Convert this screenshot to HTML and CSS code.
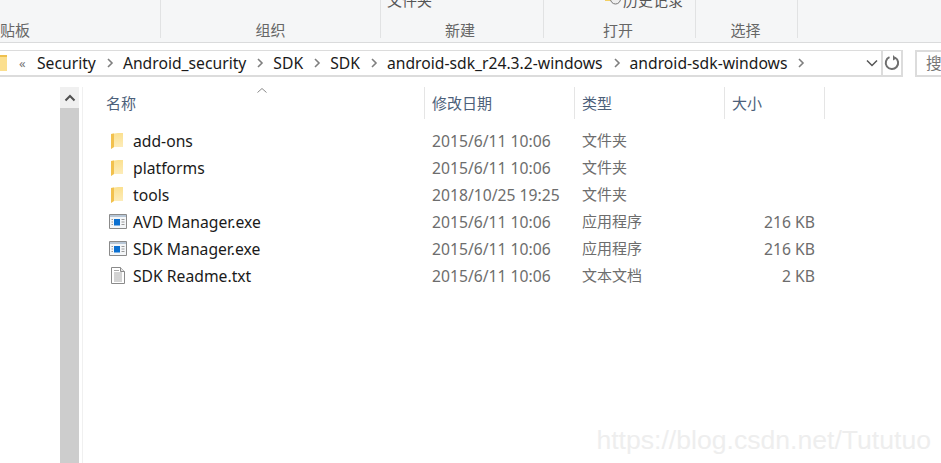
FILE: index.html
```html
<!DOCTYPE html>
<html lang="en">
<head>
    <meta charset="UTF-8">
    <title>android-sdk-windows</title>
    <link rel="stylesheet" href="styles.css">
</head>
<body>
    <svg class="defs" width="0" height="0">
        <defs>
            <linearGradient id="folderFill" x1="0" y1="0" x2="0" y2="1">
                <stop offset="0" stop-color="#fbe08f"/>
                <stop offset="1" stop-color="#fdeec0"/>
            </linearGradient>
        </defs>
        <symbol id="folder" viewBox="0 0 12 16">
            <path d="M0 1l7-1h5v14h-9l-3 2z" fill="url(#folderFill)"/>
            <path d="M0 1l3-.5v13.500l-3 2z" fill="#f2c14e"/>
        </symbol>
        <symbol id="exe" viewBox="0 0 18 15">
            <path d="M.5.5h17v14h-17z" fill="#f4f6f8" stroke="#8a8a8a"/>
            <path d="M1 1h16v2h-16z" fill="#b7c6d6"/>
            <path d="M5 5h6v6.500h-6z" fill="#0a6fd0"/>
            <path d="M12.500 5.500h3M12.500 8h3M12.500 10.500h3M2.500 5.500h1.500M2.500 8h1.500M2.500 10.500h1.500" stroke="#9a9a9a" fill="none"/>
        </symbol>
        <symbol id="txt" viewBox="0 0 14 17">
            <path d="M.5.500h9l4 4v12h-13z" fill="#fff" stroke="#8a8a8a"/>
            <path d="M9.500.500v4h4" fill="#e4e4e4" stroke="#8a8a8a"/>
            <path d="M3 3.500h5M3 6h8M3 8h8M3 10h8M3 12h8M3 14h8" stroke="#a8a8a8" fill="none"/>
        </symbol>
        <symbol id="chev" viewBox="0 0 8 12">
            <path d="M2 2l4 4-4 4" fill="none" stroke="#7f7f7f" stroke-width="1.600"/>
        </symbol>
    </svg>

    <div class="ribbon">
        <div class="group group-clip"><span class="label">贴板</span></div>
        <div class="group group-org"><span class="label">组织</span></div>
        <div class="group group-new">
            <span class="cut cut-new">文件夹</span>
            <span class="label">新建</span>
        </div>
        <div class="group group-open">
            <span class="cut cut-open">
                <svg width="16" height="14" viewBox="0 0 16 14">
                    <path d="M0 0h7v8h-7z" fill="#f3d063"/>
                    <circle cx="10.500" cy="6" r="5" fill="#eee" stroke="#777"/>
                    <path d="M2 6l3.500-5 3.500 5z" fill="#2fa52f"/>
                </svg>
                历史记录
            </span>
            <span class="label">打开</span>
        </div>
        <div class="group group-select"><span class="label">选择</span></div>
    </div>

    <div class="address-row">
        <div class="address">
            <svg class="addr-folder" width="7" height="16" viewBox="0 0 7 16">
                <path d="M0 0h7v16h-7z" fill="#fbdf8f"/>
                <path d="M0 0h7v2h-7z" fill="#eec04f"/>
            </svg>
            <span class="more">«</span>
            <span class="crumb">Security</span>
            <svg class="sep"><use href="#chev"/></svg>
            <span class="crumb">Android_security</span>
            <svg class="sep"><use href="#chev"/></svg>
            <span class="crumb">SDK</span>
            <svg class="sep"><use href="#chev"/></svg>
            <span class="crumb">SDK</span>
            <svg class="sep"><use href="#chev"/></svg>
            <span class="crumb">android-sdk_r24.3.2-windows</span>
            <svg class="sep"><use href="#chev"/></svg>
            <span class="crumb">android-sdk-windows</span>
            <svg class="sep"><use href="#chev"/></svg>
            <svg class="drop" width="12" height="8" viewBox="0 0 12 8">
                <path d="M1 1.500l5 5 5-5" fill="none" stroke="#555" stroke-width="1.500"/>
            </svg>
            <div class="refresh">
                <svg width="16" height="16" viewBox="0 0 16 16">
                    <path d="M11 2.500a6.200 6.200 0 1 1-5.500-.3" fill="none" stroke="#6f6f6f" stroke-width="2"/>
                    <path d="M9 0v5.500l3.500-2z" fill="#6f6f6f"/>
                </svg>
            </div>
        </div>
        <div class="search">搜</div>
    </div>

    <div class="main">
        <div class="scrollbar">
            <div class="scroll-up">
                <svg width="12" height="8" viewBox="0 0 12 8">
                    <path d="M1.500 6.500l4.500-4.500 4.500 4.500" fill="none" stroke="#505050" stroke-width="2"/>
                </svg>
            </div>
            <div class="scroll-thumb"></div>
        </div>
        <div class="files">
            <div class="columns">
                <div class="col col-name">名称
                    <svg class="sort" width="10" height="5" viewBox="0 0 10 5">
                        <path d="M.5 4.500l4.500-4 4.500 4" fill="none" stroke="#8a8a8a"/>
                    </svg>
                </div>
                <div class="col col-date">修改日期</div>
                <div class="col col-type">类型</div>
                <div class="col col-size">大小</div>
            </div>
            <div class="rows">
                <div class="row">
                    <div class="cell-name"><svg class="icon-folder"><use href="#folder"/></svg>add-ons</div>
                    <div class="cell-date">2015/6/11 10:06</div>
                    <div class="cell-type">文件夹</div>
                    <div class="cell-size"></div>
                </div>
                <div class="row">
                    <div class="cell-name"><svg class="icon-folder"><use href="#folder"/></svg>platforms</div>
                    <div class="cell-date">2015/6/11 10:06</div>
                    <div class="cell-type">文件夹</div>
                    <div class="cell-size"></div>
                </div>
                <div class="row">
                    <div class="cell-name"><svg class="icon-folder"><use href="#folder"/></svg>tools</div>
                    <div class="cell-date">2018/10/25 19:25</div>
                    <div class="cell-type">文件夹</div>
                    <div class="cell-size"></div>
                </div>
                <div class="row">
                    <div class="cell-name"><svg class="icon-exe"><use href="#exe"/></svg>AVD Manager.exe</div>
                    <div class="cell-date">2015/6/11 10:06</div>
                    <div class="cell-type">应用程序</div>
                    <div class="cell-size">216 KB</div>
                </div>
                <div class="row">
                    <div class="cell-name"><svg class="icon-exe"><use href="#exe"/></svg>SDK Manager.exe</div>
                    <div class="cell-date">2015/6/11 10:06</div>
                    <div class="cell-type">应用程序</div>
                    <div class="cell-size">216 KB</div>
                </div>
                <div class="row">
                    <div class="cell-name"><svg class="icon-txt"><use href="#txt"/></svg>SDK Readme.txt</div>
                    <div class="cell-date">2015/6/11 10:06</div>
                    <div class="cell-type">文本文档</div>
                    <div class="cell-size">2 KB</div>
                </div>
            </div>
        </div>
    </div>

    <div class="watermark">https://blog.csdn.net/Tututuo</div>
</body>
</html>
```

FILE: styles.css
```css
* {
    margin: 0;
    padding: 0;
    box-sizing: border-box;
}

body {
    width: 941px;
    height: 463px;
    overflow: hidden;
    position: relative;
    background: #fff;
    font-family: "Noto Sans", "Noto Sans CJK SC", sans-serif;
    font-size: 15.7px;
    color: #1a1a1a;
}

.defs {
    position: absolute;
}

.ribbon {
    display: flex;
    height: 43px;
    padding-bottom: 4px;
    background: #f5f6f7;
    border-bottom: 1px solid #dadbdc;
    color: #666;
    font-size: 15px;
    overflow: hidden;
}

.group {
    display: flex;
    flex-direction: column;
    justify-content: flex-end;
    align-items: center;
    height: 38px;
    border-right: 1px solid #e1e2e3;
    white-space: nowrap;
}

.label {
    line-height: 20px;
    height: 18px;
}

.cut {
    line-height: 20px;
    margin-bottom: 10px;
    color: #555;
    align-self: flex-start;
}

.cut-new {
    margin-left: 6px;
}

.cut-open {
    display: flex;
    align-items: center;
    gap: 2px;
    margin-left: 61px;
}

.group-clip {
    width: 161px;
    align-items: flex-start;
}

.group-org {
    width: 220px;
}

.group-new {
    width: 163px;
    padding-right: 4px;
}

.group-open {
    width: 152px;
    padding-right: 3px;
}

.group-select {
    width: 102px;
    padding-right: 2px;
}

.address-row {
    display: flex;
    gap: 12px;
    margin-top: 7px;
    height: 27px;
}

.address {
    display: flex;
    align-items: center;
    width: 903px;
    flex-shrink: 0;
    border: 2px solid #dcdcdc;
    border-width: 1px 2px 2px 0;
    white-space: nowrap;
}

.addr-folder {
    margin-right: 12px;
}

.more {
    width: 18px;
    color: #777;
    font-size: 13px;
}

.sep {
    width: 8px;
    height: 12px;
    margin: 0 9px 0 10px;
}

.drop {
    margin-left: auto;
    margin-right: 3px;
}

.refresh {
    display: flex;
    align-items: center;
    justify-content: center;
    width: 20px;
    height: 100%;
    border-left: 2px solid #dcdcdc;
}

.search {
    flex: 1;
    border: 2px solid #dcdcdc;
    border-right: 0;
    padding-left: 9px;
    line-height: 22px;
    color: #777;
}

.main {
    display: flex;
    margin-top: 10px;
    padding-left: 60px;
}

.scrollbar {
    width: 19px;
    height: 376px;
    flex-shrink: 0;
    display: flex;
    flex-direction: column;
}

.scroll-up {
    display: flex;
    align-items: center;
    justify-content: center;
    height: 21px;
    background: #f0f0f0;
}

.scroll-thumb {
    flex: 1;
    background: #cdcdcd;
}

.files {
    flex: 1;
    border-left: 1px solid #f0f0f0;
    margin-left: 3px;
}

.columns {
    display: flex;
    height: 33px;
    color: #4c607a;
    font-size: 15px;
    line-height: 33px;
}

.col {
    height: 32px;
    border-right: 1px solid #e5e5e5;
    white-space: nowrap;
    padding-left: 7px;
}

.col-name {
    position: relative;
    width: 342px;
    padding-left: 23px;
}

.sort {
    position: absolute;
    left: 174px;
    top: 1px;
}

.col-date {
    width: 150px;
}

.col-type {
    width: 150px;
}

.col-size {
    width: 100px;
}

.rows {
    margin-top: 7px;
}

.row {
    display: flex;
    align-items: center;
    height: 27px;
    white-space: nowrap;
}

.cell-name {
    display: flex;
    align-items: center;
    width: 342px;
    padding-left: 26px;
}

.icon-folder {
    width: 12px;
    height: 16px;
    margin: 0 10px 0 2px;
}

.icon-txt {
    width: 14px;
    height: 17px;
    margin: 0 8px 0 2px;
}

.icon-exe {
    width: 18px;
    height: 15px;
    margin-right: 6px;
}

.cell-date {
    width: 150px;
    padding-left: 7px;
    color: #6d6d6d;
}

.cell-type {
    width: 150px;
    padding-left: 7px;
    color: #6d6d6d;
    font-size: 15px;
    line-height: 22px;
    height: 24px;
}

.cell-size {
    width: 90px;
    text-align: right;
    color: #6d6d6d;
}

.watermark {
    position: absolute;
    right: 10px;
    bottom: 7px;
    font-family: "Liberation Sans", sans-serif;
    font-size: 26.6px;
    color: #eeeeee;
    white-space: nowrap;
}
```
